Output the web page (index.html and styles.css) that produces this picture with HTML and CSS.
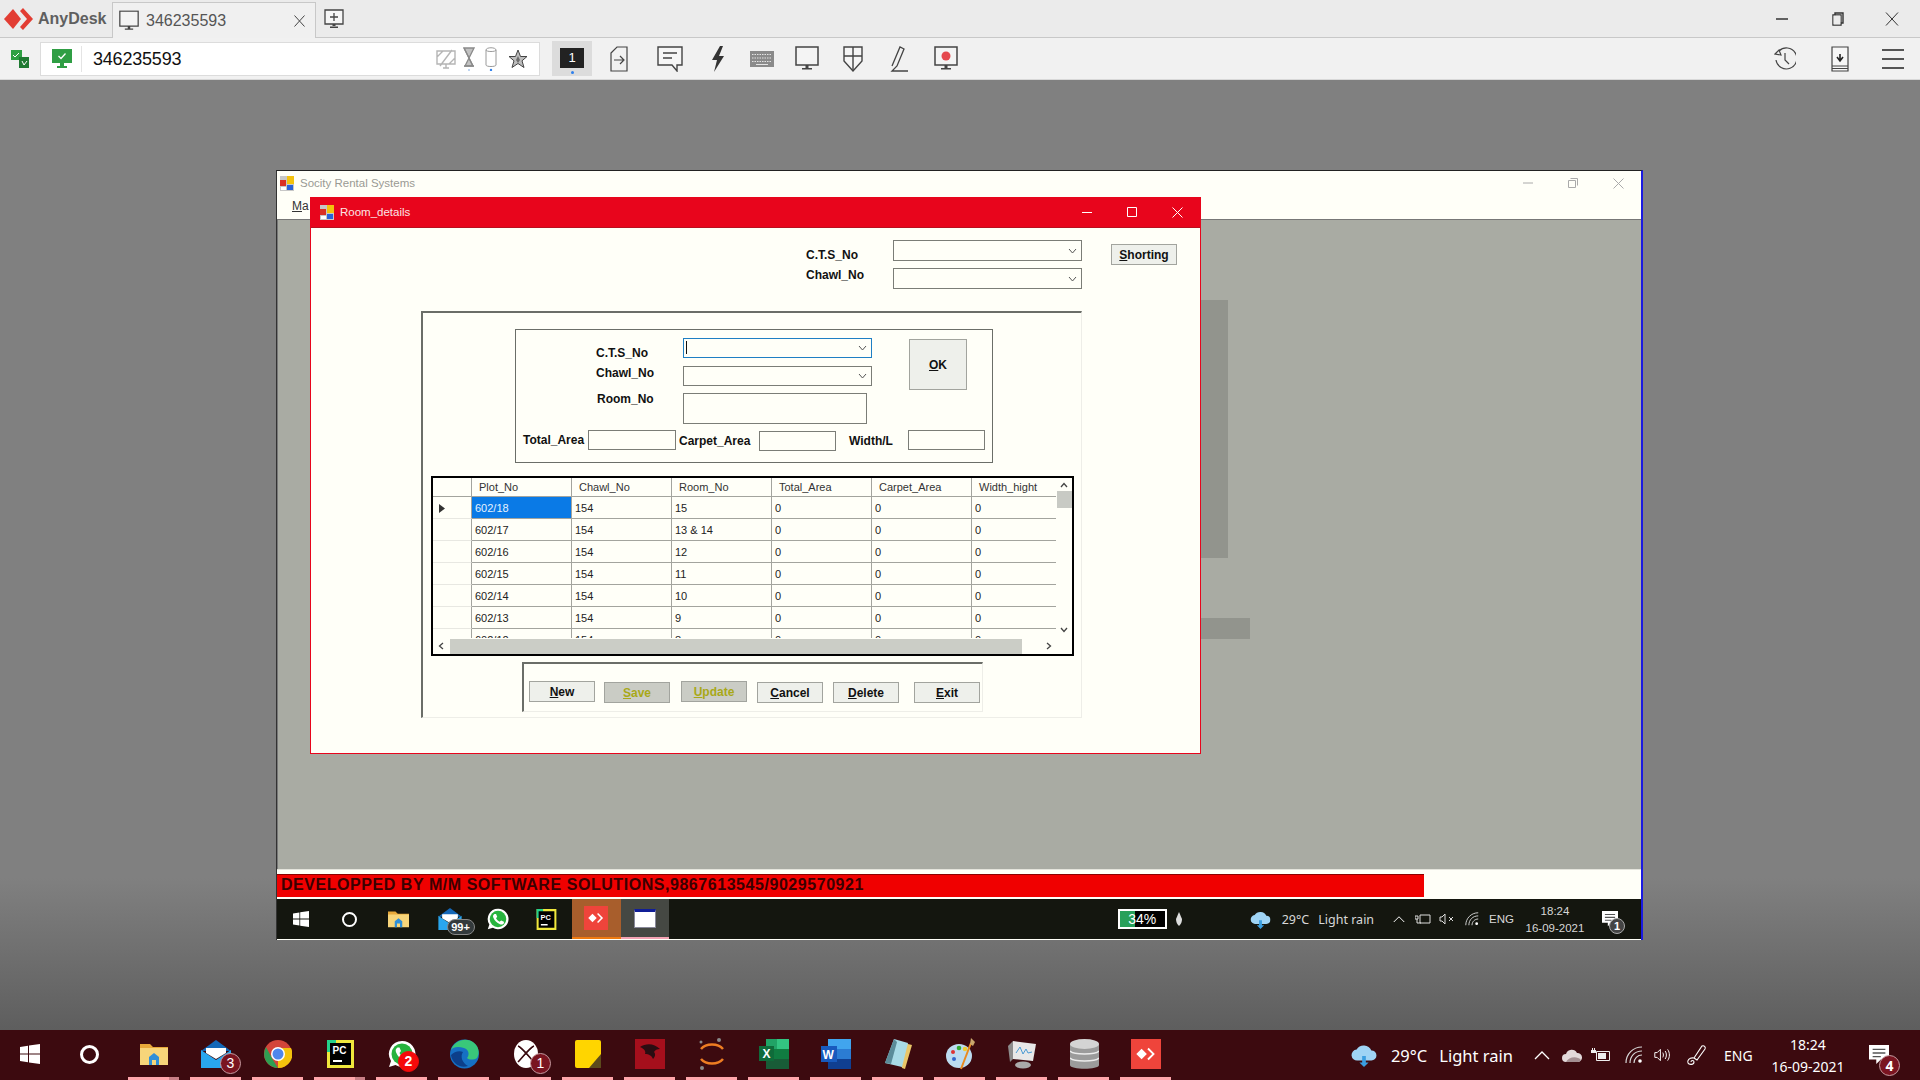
FILE: index.html
```html
<!DOCTYPE html>
<html>
<head>
  <meta charset="UTF-8">
  <title>AnyDesk - 346235593</title>
  <link rel="stylesheet" href="styles.css">
</head>
<body>

<!-- shared icons -->
<svg class="icon-defs">
  <symbol id="i-win" viewBox="0 0 20 20"><path fill="#fff" d="M0 3l8-1.200V9.500H0zM9 1.600L20 0v9.500H9zM0 10.500h8v7.700L0 17zM9 10.500h11V20L9 18.400z"/></symbol>
  <symbol id="i-folder" viewBox="0 0 28 24"><path fill="#e8a93a" d="M0 2h10l3 3h15v4H0z"/><path fill="#f7d57a" d="M0 6h28v17H0z"/><path fill="#2f8fd8" d="M9 23v-8l5-4 5 4v8h-3v-5h-4v5z"/></symbol>
  <symbol id="i-mail" viewBox="0 0 30 28"><path fill="#1468b8" d="M15 0l15 11H0z"/><path fill="#29a6ee" d="M0 10l15 10 15-10v18H0z"/><path fill="#fff" d="M5 8h20v5l-10 6-10-6z"/></symbol>
  <symbol id="i-whats" viewBox="0 0 28 28"><path fill="#fff" d="M14 1a13 13 0 0 0-11 20L1 27l6.500-2A13 13 0 1 0 14 1z"/><circle cx="14" cy="14" r="10.500" fill="#27b43e"/><path fill="#fff" d="M9.500 7.500l2 0 1.500 3.500-1.500 2c1 2 2.500 3.500 4.500 4.500l2-1.500 3.500 1.500v2c-1 1.500-3 2-5 1.200-4-1.500-7-4.500-8.500-8.500-.7-2-.2-3.500 1.500-4.700z"/></symbol>
  <symbol id="i-pc" viewBox="0 0 27 28"><path fill="#f0e73c" d="M0 0h27v28H0z"/><path fill="#23d18b" d="M0 0h9v4H4v8H0z"/><path fill="#000" d="M3 3h21v22H3z"/><path fill="#fff" d="M6 20h9v2H6z"/></symbol>
  <symbol id="i-any" viewBox="0 0 34 34"><path fill="#ef443b" d="M0 0h34v34H0z"/><path fill="#fff" d="M6 17l6-6 6 6-6 6zM20 10l7 7-7 7-1.500-1.500 5.500-5.500-5.500-5.500z"/></symbol>
  <symbol id="i-app" viewBox="0 0 14 15"><path fill="#c7c7c7" d="M0 0h14v15H0z"/><path fill="#f4c20d" d="M7 0h7v8H7z"/><path fill="#d93025" d="M0 4h6v6H0z"/><path fill="#2a62d8" d="M7 9h6v5H7z"/><path fill="#fff" d="M1 11h5v3H1z"/></symbol>
  <symbol id="i-cloud" viewBox="0 0 28 26"><path fill="#9fd4f5" d="M7 19a6 6 0 0 1-1-12 9 9 0 0 1 16 1 5.500 5.500 0 0 1 0 11z"/><path fill="#3b9ee0" d="M12 14h4v7h3l-5 5-5-5h3z"/></symbol>
  <symbol id="i-chev" viewBox="0 0 16 10"><path fill="none" stroke="#fff" stroke-width="1.300" d="M1 9l7-7 7 7"/></symbol>
  <symbol id="i-wifi" viewBox="0 0 18 18"><g fill="none" stroke="#d8d8d8" stroke-width="1.200"><path d="M1 17C1 8 8 1 17 1"/><path d="M5 17C5 10 10 5 17 5"/><path d="M9 17c0-4.500 3.500-8 8-8"/></g><circle cx="15" cy="15" r="1.800" fill="#fff"/></symbol>
  <symbol id="i-note" viewBox="0 0 22 22"><path fill="#fff" d="M0 0h22v16h-9l-5 5v-5H0z"/><path fill="#555" d="M4 4h14v1.500H4zM4 8h14v1.500H4zM4 12h9v1.500H4z"/></symbol>
  <symbol id="i-monitor" viewBox="0 0 24 26"><path fill="#f4f4f4" stroke="#444" stroke-width="1.500" d="M1 1h22v18H1z"/><path fill="#444" d="M10.500 19h3v3h-3zM7 22h10v1.500H7z"/></symbol>
</svg>

<div class="tabbar">
  <svg class="logo" width="30" height="24" viewBox="0 0 30 24"><path fill="#e23d33" d="M0 12L9 2l8 10-8 10z"/><path fill="#e23d33" d="M19 1l10 11-10 11-3-3 7-8-7-8z"/></svg>
  <span class="brand">AnyDesk</span>
  <div class="tab">
    <svg width="20" height="22" viewBox="0 0 24 26"><use href="#i-monitor"/></svg>
    <span class="tab-title">346235593</span>
    <svg class="tab-close" width="11" height="12" viewBox="0 0 11 12"><path stroke="#444" fill="none" d="M.5.500l10 11M10.500.500l-10 11"/></svg>
  </div>
  <svg class="tab-add" width="20" height="20" viewBox="0 0 20 20"><path fill="#f6f6f6" stroke="#444" stroke-width="1.300" d="M1 1h18v14H1z"/><path stroke="#444" stroke-width="1.300" d="M10 4v8M6 8h8"/><path fill="#444" d="M8.500 15h3v2h-3zM6 17.500h8V19H6z"/></svg>
  <div class="win-controls">
    <svg class="win-min" width="12" height="12" viewBox="0 0 12 12"><path stroke="#333" stroke-width="1.500" d="M0 6h12"/></svg>
    <svg width="12" height="14" viewBox="0 0 12 14"><path fill="none" stroke="#333" stroke-width="1.400" d="M3 1h8v10H3zM1 3h8v10H1z"/><path fill="#ececec" d="M1.500 3.500h7v9h-7z"/></svg>
    <svg width="14" height="14" viewBox="0 0 14 14"><path stroke="#333" fill="none" d="M1 .500l12 13M13 .500l-12 13"/></svg>
  </div>
</div>

<div class="toolbar">
  <svg class="tb-status" width="20" height="20" viewBox="0 0 20 20"><path fill="#2ea043" d="M1 1h11v10H1z"/><path fill="#1f7a32" d="M9 8h10v11H9z"/><path stroke="#fff" fill="none" d="M3 6l2 2 4-4M12 12l2 4 3-4"/></svg>
  <div class="address">
    <svg width="20" height="19" viewBox="0 0 20 19"><path fill="#2f9e44" d="M0 0h20v14H0z"/><path fill="#2f9e44" d="M8 14h4v3h3v2H5v-2h3z"/><path stroke="#fff" stroke-width="1.300" fill="none" d="M6.500 7l2.500 2.500 4.500-5"/></svg>
    <span class="address-id">346235593</span>
    <div class="addr-icons">
      <svg width="20" height="20" viewBox="0 0 20 20"><g fill="none" stroke="#b5b5b5" stroke-width="1.400"><path d="M1 2h18v13H1zM7 19h6M10 15v4M4 17L16 1M1 8l6-6M13 15l6-6"/></g></svg>
      <svg width="12" height="24" viewBox="0 0 12 24"><path fill="#c2c2c2" stroke="#8a8a8a" stroke-width="1.300" d="M1 1h10L2 19h8z"/><path fill="none" stroke="#8a8a8a" stroke-width="1.300" d="M1 1l9 18M1 19h10"/><circle cx="6" cy="23" r="1" fill="#a9c7ee"/></svg>
      <svg width="12" height="24" viewBox="0 0 12 24"><path fill="none" stroke="#9a9a9a" d="M1 3c0-3 10-3 10 0v15c0 2-10 2-10 0zM1 3c0 2 10 2 10 0"/><circle cx="6" cy="23" r="1.200" fill="#2f80ed"/></svg>
      <svg width="20" height="20" viewBox="0 0 20 20"><path fill="#bdbdbd" stroke="#444" d="M10 1l2.500 6.500H19l-5 4.300 2 6.700-6-4-6 4 2-6.700-5-4.300h6.500z"/><path fill="#6d6d6d" d="M10 7l2 4-2 3-2-3z"/></svg>
    </div>
  </div>
  <div class="tool-active"><span class="screen-no">1</span><i class="tool-dot"></i></div>
  <div class="tools">
    <svg width="18" height="26" viewBox="0 0 18 26"><path fill="none" stroke="#444" stroke-width="1.200" d="M1 7l6-6h10v24H1z"/><path fill="none" stroke="#444" stroke-width="1.200" d="M4 14h9M10 10l4 4-4 4"/></svg>
    <svg width="26" height="26" viewBox="0 0 26 26"><path fill="#f6f6f6" stroke="#444" stroke-width="1.400" d="M1 1h24v18h-5v6l-5-6H1z"/><path stroke="#444" stroke-width="1.400" d="M6 7h14M6 12h9"/></svg>
    <svg width="14" height="26" viewBox="0 0 14 26"><path fill="#333" d="M9 0L1 14h5L3 26l10-16H8l4-10z"/></svg>
    <svg width="24" height="16" viewBox="0 0 24 16"><path fill="#8a8a8a" d="M0 0h24v16H0z"/><path fill="none" stroke="#e4e4e4" stroke-dasharray="1.500 1" d="M2 3.500h20M2 7h20M2 10.500h20"/><path stroke="#e4e4e4" d="M6 13.500h12"/></svg>
    <svg width="24" height="26" viewBox="0 0 24 26"><use href="#i-monitor"/></svg>
    <svg width="20" height="26" viewBox="0 0 20 26"><path fill="#f6f6f6" stroke="#444" stroke-width="1.400" d="M1 1h18v14l-9 10-9-10z"/><path stroke="#444" stroke-width="1.400" d="M10 1v24M1 10h18"/></svg>
    <svg width="20" height="26" viewBox="0 0 20 26"><path fill="none" stroke="#444" stroke-width="1.300" d="M3 20L11 1l4 2-7 17-5 5h16"/></svg>
    <svg width="24" height="26" viewBox="0 0 24 26"><use href="#i-monitor"/><circle cx="12" cy="10" r="4.500" fill="#e5484d"/></svg>
  </div>
  <div class="tools-right">
    <svg width="22" height="24" viewBox="0 0 22 24"><path fill="none" stroke="#444" stroke-width="1.200" d="M5 4a10.500 10.500 0 1 1-3 9M11 6v7l4 4M1 7l4-4 2 5z"/></svg>
    <svg width="18" height="26" viewBox="0 0 18 26"><path fill="#f6f6f6" stroke="#444" stroke-width="1.200" d="M1 1h16v24H1z"/><path stroke="#444" d="M1 20h16M1 22.500h16"/><path stroke="#222" stroke-width="1.600" fill="none" d="M9 8v6M6 11l3 4 3-4"/></svg>
    <svg width="22" height="22" viewBox="0 0 22 22"><path stroke="#555" stroke-width="2" d="M0 2h22M0 11h22M0 20h22"/></svg>
  </div>
</div>

<div class="desktop">
  <div class="remote">
    <div class="mdi-title">
      <svg width="14" height="15" viewBox="0 0 14 15"><use href="#i-app"/></svg>
      <span>Socity Rental Systems</span>
      <div class="mdi-controls">
        <svg width="10" height="10" viewBox="0 0 10 10"><path stroke="#aaa" d="M0 5h10"/></svg>
        <svg width="10" height="10" viewBox="0 0 10 10"><path fill="none" stroke="#aaa" d="M2.500.500h7v7M.500 2.500h7v7h-7z"/></svg>
        <svg width="11" height="11" viewBox="0 0 11 11"><path stroke="#aaa" fill="none" d="M.5.500l10 10M10.500.500l-10 10"/></svg>
      </div>
    </div>
    <div class="mdi-menu"><u>M</u>a</div>
    <div class="mdi-client">
      <div class="behind behind-tall"></div>
      <div class="behind behind-wide"></div>

      <div class="dialog">
        <div class="dialog-title">
          <svg width="14" height="15" viewBox="0 0 14 15"><use href="#i-app"/></svg>
          <span>Room_details</span>
          <div class="dialog-controls">
            <svg width="10" height="10" viewBox="0 0 10 10"><path stroke="#fff" d="M0 5.500h10"/></svg>
            <svg width="10" height="10" viewBox="0 0 10 10"><path fill="none" stroke="#fff" d="M.5.500h9v9h-9z"/></svg>
            <svg width="11" height="11" viewBox="0 0 11 11"><path stroke="#fff" fill="none" d="M.5.500l10 10M10.500.500l-10 10"/></svg>
          </div>
        </div>

        <div class="filter">
          <label class="lbl lbl-low">C.T.S_No</label>
          <div class="combo"><svg width="9" height="6" viewBox="0 0 9 6"><path fill="none" stroke="#555" d="M1 1l3.500 4L8 1"/></svg></div>
          <button class="btn btn-short"><u>S</u>horting</button>
          <label class="lbl">Chawl_No</label>
          <div class="combo"><svg width="9" height="6" viewBox="0 0 9 6"><path fill="none" stroke="#555" d="M1 1l3.500 4L8 1"/></svg></div>
        </div>

        <div class="panel">
          <div class="group">
            <div class="entry">
              <label class="lbl lbl-low">C.T.S_No</label>
              <div class="combo combo-focus"><i class="caret"></i><svg width="9" height="6" viewBox="0 0 9 6"><path fill="none" stroke="#555" d="M1 1l3.500 4L8 1"/></svg></div>
              <button class="btn btn-ok"><u>O</u>K</button>
              <label class="lbl">Chawl_No</label>
              <div class="combo"><svg width="9" height="6" viewBox="0 0 9 6"><path fill="none" stroke="#555" d="M1 1l3.500 4L8 1"/></svg></div>
              <label class="lbl lbl-room">Room_No</label>
              <div class="field field-room"></div>
            </div>
            <div class="areas">
              <label class="lbl area-total">Total_Area</label>
              <div class="field area-input-total"></div>
              <label class="lbl area-carpet">Carpet_Area</label>
              <div class="field area-input-carpet"></div>
              <label class="lbl area-width">Width/L</label>
              <div class="field area-input-width"></div>
            </div>
          </div>

          <div class="gridview">
            <div class="grid-clip">
              <table>
                <colgroup><col class="c-head"><col class="c-n"><col class="c-n"><col class="c-n"><col class="c-n"><col class="c-n"><col class="c-last"></colgroup>
                <thead><tr><th></th><th>Plot_No</th><th>Chawl_No</th><th>Room_No</th><th>Total_Area</th><th>Carpet_Area</th><th>Width_hight</th></tr></thead>
                <tbody>
                  <tr><th class="row-head"><svg width="6" height="9" viewBox="0 0 6 9"><path fill="#333" d="M0 0l6 4.500L0 9z"/></svg></th><td class="selected">602/18</td><td>154</td><td>15</td><td>0</td><td>0</td><td>0</td></tr>
                  <tr><th class="row-head"></th><td>602/17</td><td>154</td><td>13 &amp; 14</td><td>0</td><td>0</td><td>0</td></tr>
                  <tr><th class="row-head"></th><td>602/16</td><td>154</td><td>12</td><td>0</td><td>0</td><td>0</td></tr>
                  <tr><th class="row-head"></th><td>602/15</td><td>154</td><td>11</td><td>0</td><td>0</td><td>0</td></tr>
                  <tr><th class="row-head"></th><td>602/14</td><td>154</td><td>10</td><td>0</td><td>0</td><td>0</td></tr>
                  <tr><th class="row-head"></th><td>602/13</td><td>154</td><td>9</td><td>0</td><td>0</td><td>0</td></tr>
                  <tr><th class="row-head"></th><td>602/12</td><td>154</td><td>8</td><td>0</td><td>0</td><td>0</td></tr>
                </tbody>
              </table>
            </div>
            <div class="vscroll">
              <svg width="8" height="6" viewBox="0 0 8 6"><path fill="none" stroke="#444" stroke-width="1.300" d="M1 5l3-3.500L7 5"/></svg>
              <i class="vthumb"></i>
              <svg class="vdown" width="8" height="6" viewBox="0 0 8 6"><path fill="none" stroke="#444" stroke-width="1.300" d="M1 1l3 3.500L7 1"/></svg>
            </div>
            <div class="hscroll">
              <svg width="6" height="8" viewBox="0 0 6 8"><path fill="none" stroke="#444" stroke-width="1.300" d="M5 1L1.500 4 5 7"/></svg>
              <i class="hthumb"></i>
              <svg width="6" height="8" viewBox="0 0 6 8"><path fill="none" stroke="#444" stroke-width="1.300" d="M1 1l3.500 3L1 7"/></svg>
            </div>
          </div>

          <div class="actions">
            <button class="btn"><u>N</u>ew</button>
            <button class="btn btn-off low gap-s"><u>S</u>ave</button>
            <button class="btn btn-off gap-u"><u>U</u>pdate</button>
            <button class="btn low"><u>C</u>ancel</button>
            <button class="btn low"><u>D</u>elete</button>
            <button class="btn low gap-x"><u>E</u>xit</button>
          </div>
        </div>
      </div>
    </div>

    <div class="mdi-strip"></div>
    <div class="mdi-status"><div class="status-red">DEVELOPPED BY M/M SOFTWARE SOLUTIONS,9867613545/9029570921</div></div>

    <div class="rtask">
      <div class="rtask-item"><svg width="16" height="16"><use href="#i-win"/></svg></div>
      <div class="rtask-item"><i class="ring ring-small"></i></div>
      <div class="rtask-item"><svg width="21" height="18" viewBox="0 0 28 24"><use href="#i-folder"/></svg></div>
      <div class="rtask-item"><svg class="shift-r" width="24" height="22" viewBox="0 0 30 28"><use href="#i-mail"/></svg><span class="rbadge">99+</span></div>
      <div class="rtask-item"><svg class="shift-r" width="22" height="22" viewBox="0 0 28 28"><use href="#i-whats"/></svg></div>
      <div class="rtask-item"><svg class="shift-r" width="21" height="21" viewBox="0 0 27 28"><use href="#i-pc"/><text x="5.500" y="14" font-family="Liberation Sans" font-weight="700" font-size="10" fill="#fff">PC</text></svg></div>
      <div class="rtask-item rtask-any"><svg width="24" height="24" viewBox="0 0 34 34"><use href="#i-any"/></svg></div>
      <div class="rtask-item rtask-win"><i class="mini-win"></i></div>
      <div class="rtray">
        <div class="batt"><i class="batt-fill"></i><span>34%</span></div>
        <svg class="rmic" width="6" height="14" viewBox="0 0 6 14"><path fill="#ddd" d="M3 0l3 7c0 3-1 5-3 7-2-2-3-4-3-7z"/></svg>
        <svg class="rcloud" width="21" height="19" viewBox="0 0 28 26"><use href="#i-cloud"/></svg>
        <span class="rweather">29°C</span>
        <span class="rweather rain">Light rain</span>
        <svg class="rchev" width="12" height="8" viewBox="0 0 16 10"><use href="#i-chev"/></svg>
        <svg class="rplug" width="16" height="12" viewBox="0 0 16 12"><path fill="none" stroke="#ddd" d="M5 2h10v8H5zM0 3h3v3H0zM2 6v4h4"/></svg>
        <svg class="rspk" width="16" height="12" viewBox="0 0 16 12"><path fill="none" stroke="#ddd" d="M1 4h2l3-3v10L3 8H1zM10 4l4 4M14 4l-4 4"/></svg>
        <svg class="rwifi" width="14" height="14" viewBox="0 0 18 18"><use href="#i-wifi"/></svg>
        <span class="reng">ENG</span>
        <div class="rclock"><span>18:24</span><span>16-09-2021</span></div>
        <div class="rnotif"><svg width="16" height="16" viewBox="0 0 22 22"><use href="#i-note"/></svg><span>1</span></div>
      </div>
    </div>
  </div>
</div>

<div class="taskbar">
  <div class="task-item"><svg width="20" height="20"><use href="#i-win"/></svg></div>
  <div class="task-item"><i class="ring"></i></div>
  <div class="task-item open stack"><svg width="28" height="24" viewBox="0 0 28 24"><use href="#i-folder"/></svg></div>
  <div class="task-item open"><svg width="30" height="28" viewBox="0 0 30 28"><use href="#i-mail"/></svg><span class="badge">3</span></div>
  <div class="task-item open"><svg width="28" height="30" viewBox="0 0 28 28">
    <circle cx="14" cy="14" r="14" fill="#d3453a"/><path fill="#f4c20d" d="M14 8h13a14 14 0 0 1-13 20z"/><path fill="#2f9e52" d="M2 7l7 13 5 8A14 14 0 0 1 2 7z"/><circle cx="14" cy="14" r="7" fill="#fff"/><circle cx="14" cy="14" r="5.500" fill="#4f86ec"/></svg></div>
  <div class="task-item open stack"><svg width="27" height="28" viewBox="0 0 27 28"><use href="#i-pc"/><text x="5.500" y="14" font-family="Liberation Sans" font-weight="700" font-size="10" fill="#fff">PC</text></svg></div>
  <div class="task-item open"><svg width="28" height="28" viewBox="0 0 28 28"><use href="#i-whats"/></svg><span class="badge badge-red">2</span></div>
  <div class="task-item open"><svg width="29" height="30" viewBox="0 0 29 30">
    <circle cx="14.500" cy="15" r="14.500" fill="#1670c4"/><path fill="#39c77a" d="M1 11C4 2 15-2 23 3c6 4 7 11 4 16-3 2-8 2-10 0 2-2 3-8-3-10C8 7 3 8 1 11z"/><path fill="#0c3f8a" d="M13 13c-3 4-1 11 5 14-8 3-16-3-17-11 3-3 8-5 12-3z"/></svg></div>
  <div class="task-item open"><svg width="26" height="28" viewBox="0 0 26 28"><ellipse cx="13" cy="14" rx="12" ry="14" fill="#fff"/><path stroke="#3c0a0f" stroke-width="1.600" d="M5 6c4 1 12 12 16 16M21 6C17 7 9 18 5 22"/></svg><span class="badge">1</span></div>
  <div class="task-item open"><svg width="26" height="28" viewBox="0 0 26 28"><path fill="#ffd500" d="M2 0h22a2 2 0 0 1 2 2v26H2a2 2 0 0 1-2-2V2a2 2 0 0 1 2-2z"/><path fill="#5c4a1c" d="M26 14L14 28h12z"/></svg></div>
  <div class="task-item open"><svg width="30" height="30" viewBox="0 0 30 30"><path fill="#a50f1c" d="M0 0h30v30H0z"/><path fill="#2a0d12" d="M5 8c6-4 14-4 20 2-3 0-5 1-6 3 2 2 1 5-1 7-1-3-4-5-8-5 1-2 0-5-5-7z"/></svg></div>
  <div class="task-item open"><svg width="28" height="34" viewBox="0 0 28 34"><g fill="none" stroke="#ee7d22" stroke-width="2.500"><path d="M3 12c5-6 17-6 22 0"/><path d="M3 22c5 6 17 6 22 0"/></g><circle cx="21" cy="3" r="2" fill="#8a8a8a"/><circle cx="3" cy="5" r="1.500" fill="#8a8a8a"/><circle cx="4" cy="31" r="2" fill="#8a8a8a"/></svg></div>
  <div class="task-item open"><svg width="30" height="30" viewBox="0 0 30 30"><path fill="#21a366" d="M7 0h23v10H7z"/><path fill="#33c481" d="M18 0h12v10H18z"/><path fill="#107c41" d="M7 10h23v10H7z"/><path fill="#185c37" d="M7 20h23v10H7z"/><path fill="#0f6b3a" d="M0 7h15v15H0z"/><text x="3.500" y="19" font-family="Liberation Sans" font-weight="700" font-size="12" fill="#fff">X</text></svg></div>
  <div class="task-item open"><svg width="30" height="30" viewBox="0 0 30 30"><path fill="#41a5ee" d="M7 0h23v10H7z"/><path fill="#2b7cd3" d="M7 10h23v10H7z"/><path fill="#103f91" d="M7 20h23v10H7z"/><path fill="#185abd" d="M0 7h16v16H0z"/><text x="1.500" y="19.500" font-family="Liberation Sans" font-weight="700" font-size="12" fill="#fff">W</text></svg></div>
  <div class="task-item open"><svg width="27" height="30" viewBox="0 0 27 30"><path fill="#e9c668" d="M11 2l16 4-7 24-3-1z"/><path fill="#a9dbe6" d="M9 0l14 4-6 24L0 24z"/><path fill="#5b8c99" d="M9 0L0 24l6 1L12 3z"/></svg></div>
  <div class="task-item open"><svg width="29" height="32" viewBox="0 0 29 32"><ellipse cx="13" cy="18" rx="13" ry="12" fill="#bcdcf0"/><circle cx="7" cy="14" r="2" fill="#d33"/><circle cx="13" cy="10" r="2.300" fill="#3a3"/><circle cx="19" cy="11" r="2.300" fill="#ec3"/><circle cx="8" cy="21" r="2" fill="#36c"/><path stroke="#e98a1f" stroke-width="2" d="M15 31L25 5"/><path fill="#c9a66b" d="M24 6l1-6 4 4-2 4z"/></svg></div>
  <div class="task-item open"><svg width="28" height="30" viewBox="0 0 28 30"><path fill="#e8e8e8" d="M5 2l23 3-3 17-20-2z"/><path fill="none" stroke="#4a9bd4" d="M8 14l4-6 3 7 3-5 2 4 4-1"/><path fill="#8d8d8d" d="M0 7l5-5v18l-3 3z"/><ellipse cx="15" cy="26" rx="8" ry="3.500" fill="#aaa"/></svg></div>
  <div class="task-item open"><svg width="29" height="30" viewBox="0 0 29 30"><path fill="#9b9b9b" d="M0 5v21c0 5 29 5 29 0V5z"/><ellipse cx="14.500" cy="5" rx="14.500" ry="5" fill="#d4d4d4"/><path fill="none" stroke="#ececec" stroke-width="1.500" d="M0 12c3 4 26 4 29 0M0 19c3 4 26 4 29 0"/></svg></div>
  <div class="task-item open"><svg width="30" height="30" viewBox="0 0 34 34"><use href="#i-any"/></svg></div>

  <div class="tray">
    <svg class="tray-cloud" width="26" height="24" viewBox="0 0 28 26"><use href="#i-cloud"/></svg>
    <span class="weather">29°C</span>
    <span class="weather rain-big">Light rain</span>
    <div class="cell cell-chev"><svg width="16" height="10" viewBox="0 0 16 10"><use href="#i-chev"/></svg></div>
    <div class="cell cell-drive"><svg width="20" height="13" viewBox="0 0 20 13"><path fill="#e3d9da" d="M4 13a4 4 0 0 1 0-8 6 6 0 0 1 11-1 4.500 4.500 0 0 1 1 9z"/><path fill="#a48f92" d="M4 13c2-4 8-6 12-4 4 1 3 4 0 4z"/></svg></div>
    <div class="cell cell-batt"><svg width="20" height="14" viewBox="0 0 20 14"><path fill="none" stroke="#eee" d="M5.500 3.500h13v9h-13z"/><path fill="#eee" d="M7 5h8v6H7zM0 2h5v3H0zM1 0h1v2H1zM3 0h1v2H3z"/></svg></div>
    <div class="cell cell-wifi"><svg width="18" height="18"><use href="#i-wifi"/></svg></div>
    <div class="cell cell-spk"><svg width="20" height="18" viewBox="0 0 20 18"><path fill="none" stroke="#fff" stroke-width="1.200" d="M1 6h3l4-4v14l-4-4H1zM11 6c1 2 1 4 0 6M14 4c2 3 2 7 0 10M17 2c3 4 3 10 0 14"/></svg></div>
    <div class="cell cell-pen"><svg width="22" height="22" viewBox="0 0 22 22"><path fill="none" stroke="#fff" stroke-width="1.100" d="M8 14L16 2c2-1 4 1 3 3l-8 11zM8 14c-5-1-7 3-6 5s6 2 6-1c0-2-3-2-3 0"/></svg></div>
    <span class="eng">ENG</span>
    <div class="clock"><span>18:24</span><span>16-09-2021</span></div>
    <div class="notif"><svg width="20" height="20" viewBox="0 0 22 22"><use href="#i-note"/></svg><span>4</span></div>
  </div>
</div>

</body>
</html>
```

FILE: styles.css
```css
* { box-sizing: border-box; }

html, body {
  margin: 0;
  height: 100%;
  overflow: hidden;
}

body {
  display: flex;
  flex-direction: column;
  width: 1920px;
  height: 1080px;
  font-family: "Liberation Sans", Arial, sans-serif;
  background: #808080;
}

.icon-defs { position: absolute; width: 0; height: 0; }

/* anydesk tab row */
.tabbar {
  display: flex;
  align-items: center;
  height: 38px;
  padding-left: 4px;
  background: #ebebeb;
  border-bottom: 1px solid #c8c8c8;
}
.brand {
  margin-left: 4px;
  width: 74px;
  font-size: 16px;
  font-weight: bold;
  color: #5f5f5f;
}
.tab {
  display: flex;
  align-items: center;
  align-self: flex-end;
  width: 204px;
  height: 36px;
  margin-bottom: -1px;
  padding-left: 6px;
  background: #f0f0f0;
  border: 1px solid #c8c8c8;
  border-bottom: none;
}
.tab-title {
  margin-left: 7px;
  font-size: 16px;
  color: #555;
}
.tab-close { margin-left: 68px; }
.tab-add { margin-left: 8px; }
.win-controls {
  display: flex;
  align-items: center;
  gap: 41px;
  margin-left: auto;
  padding-right: 21px;
}
.win-min { margin-right: 3px; }

/* anydesk toolbar */
.toolbar {
  display: flex;
  align-items: center;
  height: 42px;
  padding-left: 10px;
  background: #f1f1f1;
  border-bottom: 1px solid #d8d8d8;
}
.address {
  display: flex;
  align-items: center;
  width: 500px;
  height: 34px;
  margin-left: 10px;
  padding-left: 11px;
  background: #fff;
  border: 1px solid #dcdcdc;
}
.address-id {
  margin-left: 9px;
  padding-left: 11px;
  border-left: 1px solid #e4e4e4;
  font-size: 18px;
  letter-spacing: -0.2px;
  line-height: 26px;
  color: #111;
}
.addr-icons {
  display: flex;
  align-items: center;
  margin-left: auto;
  padding-right: 11px;
}
.addr-icons svg:nth-child(2) { margin-left: 7px; }
.addr-icons svg:nth-child(3) { margin-left: 10px; }
.addr-icons svg:nth-child(4) { margin-left: 11px; }
.tool-active {
  display: flex;
  flex-direction: column;
  align-items: center;
  width: 40px;
  height: 35px;
  margin-left: 12px;
  padding-top: 7px;
  background: #dcdcdc;
}
.screen-no {
  width: 24px;
  height: 20px;
  background: #222;
  color: #fff;
  font-size: 13px;
  line-height: 20px;
  text-align: center;
}
.tool-dot {
  width: 3px;
  height: 3px;
  margin-top: 3px;
  border-radius: 50%;
  background: #2f80ed;
}
.tools {
  display: grid;
  grid-auto-flow: column;
  grid-auto-columns: 46.700px;
  align-items: center;
  justify-items: center;
  margin-left: 4px;
}
.tools svg:nth-child(2) { margin-left: 8px; }
.tools svg:nth-child(3) { margin-left: 10px; }
.tools svg:nth-child(4) { margin-left: 6px; }
.tools svg:nth-child(5) { margin-left: 2px; }
.tools-right {
  display: flex;
  align-items: center;
  gap: 33px;
  margin-left: auto;
  padding-right: 16px;
}
.tools-right svg:first-child { margin-right: 2px; }

/* remote desktop picture */
.desktop {
  position: relative;
  flex: 1;
  background: linear-gradient(#808080 84%, #5e5e5e);
}
.remote {
  position: absolute;
  left: 276px;
  top: 90px;
  display: flex;
  flex-direction: column;
  width: 1367px;
  height: 770px;
  background: #fffff8;
  border-top: 1px solid #222;
  border-left: 1px solid #333;
  border-right: 2px solid #1a1ae0;
}
.mdi-title {
  display: flex;
  align-items: center;
  gap: 6px;
  height: 24px;
  padding-left: 3px;
  font-size: 11.500px;
  color: #9a9a94;
}
.mdi-controls {
  display: flex;
  align-items: center;
  gap: 35px;
  margin-left: auto;
  padding-right: 17px;
}
.mdi-menu {
  height: 24px;
  padding: 4px 0 0 15px;
  font-size: 12px;
  color: #333;
}
.mdi-client {
  position: relative;
  flex: 1;
  background: #a9aba3;
  border-top: 1px solid #777;
  border-left: 1px solid #777;
}
.behind {
  position: absolute;
  background: #92948d;
}
.behind-tall { left: 922px; top: 80px; width: 28px; height: 258px; }
.behind-wide { left: 922px; top: 398px; width: 50px; height: 21px; }
.mdi-strip {
  height: 5px;
  border-top: 1px solid #e4e4dc;
}
.mdi-status {
  height: 25px;
  padding-bottom: 2px;
}
.status-red {
  width: 1147px;
  height: 23px;
  padding-left: 4px;
  background: #f00000;
  border-top: 1px solid #8c0000;
  color: #3a0000;
  font-size: 16px;
  font-weight: bold;
  letter-spacing: 0.55px;
  line-height: 20px;
  white-space: nowrap;
}

/* form window */
.dialog {
  position: absolute;
  left: 32px;
  top: -23px;
  width: 891px;
  height: 557px;
  background: #fffff8;
  border: 1px solid #e8051c;
  border-top: none;
}
.dialog-title {
  display: flex;
  align-items: center;
  gap: 6px;
  height: 31px;
  padding-left: 9px;
  background: #e8051c;
  border-bottom: 1px solid #b8101f;
  color: #fbe6e6;
  font-size: 11.500px;
}
.dialog-controls {
  display: flex;
  align-items: center;
  gap: 35px;
  margin-left: auto;
  padding-right: 17px;
}

.lbl {
  display: block;
  font-size: 12px;
  font-weight: bold;
  line-height: 14px;
  color: #111;
  white-space: nowrap;
}
.lbl-low { margin-top: 8px; }

.combo, .field {
  background: #fffff8;
  border: 1px solid #7b7d77;
}
.combo {
  display: flex;
  align-items: center;
  justify-content: flex-end;
  padding-right: 4px;
}
.combo-focus { position: relative; border-color: #1f7fc4; }
.caret {
  position: absolute;
  left: 2px;
  top: 2px;
  width: 1px;
  height: 13px;
  background: #111;
}

.btn {
  width: 66px;
  height: 21px;
  padding: 0;
  background: #eef0eb;
  border: 1px solid #a2a49e;
  border-radius: 0;
  font-family: inherit;
  font-size: 12px;
  font-weight: bold;
  color: #111;
}
.btn-off { background: #caccc5; color: #a8a818; }

.filter {
  display: grid;
  grid-template-columns: 87px 189px 95px;
  grid-template-rows: 21px 21px;
  row-gap: 7px;
  margin: 12px 0 0 495px;
  width: 371px;
}
.btn-short { margin: 4px 0 0 29px; }

.panel {
  width: 661px;
  height: 407px;
  margin: 22px 0 0 110px;
  border-top: 2px solid #6b6e68;
  border-left: 2px solid #6b6e68;
  border-right: 1px solid #eeeee8;
  border-bottom: 1px solid #eeeee8;
}

.group {
  width: 478px;
  height: 134px;
  margin: 16px 0 0 92px;
  padding-top: 8px;
  border: 1px solid #6b6e68;
}
.entry {
  display: grid;
  grid-template-columns: 87px 189px 95px;
  grid-template-rows: 28px 27px 37px;
  padding-left: 80px;
}
.entry .combo { height: 20px; }
.btn-ok {
  grid-column: 3;
  grid-row: 1 / span 2;
  width: 58px;
  height: 51px;
  margin: 1px 0 0 37px;
}
.lbl-room { padding-left: 1px; margin-top: -1px; }
.field-room { width: 184px; height: 31px; }
.areas {
  display: flex;
  align-items: flex-start;
  padding-left: 7px;
}
.areas .field { height: 20px; }
.area-total { width: 65px; margin-top: 3px; }
.area-input-total { width: 88px; }
.area-carpet { width: 80px; margin: 4px 0 0 3px; }
.area-input-carpet { width: 77px; margin-top: 1px; }
.area-width { width: 59px; margin: 4px 0 0 13px; }
.area-input-width { width: 77px; }

/* data grid */
.gridview {
  display: grid;
  grid-template-columns: 623px 16px;
  grid-template-rows: 160px 16px;
  width: 643px;
  height: 180px;
  margin: 13px 0 0 8px;
  border: 2px solid #000;
}
.grid-clip { overflow: hidden; }
table {
  width: 623px;
  border-collapse: separate;
  border-spacing: 0;
  table-layout: fixed;
  font-size: 11px;
}
.c-head { width: 39px; }
.c-n { width: 100px; }
.c-last { width: 84px; }
thead th {
  height: 19px;
  padding: 0 0 0 7px;
  font-weight: normal;
  text-align: left;
  color: #333;
  border-right: 1px solid #a3a49e;
  border-bottom: 1px solid #a3a49e;
}
thead th:last-child { border-right: none; }
td {
  height: 22px;
  padding: 0 0 0 3px;
  color: #222;
  border-right: 1px solid #a3a49e;
  border-bottom: 1px solid #a3a49e;
  white-space: nowrap;
}
tr td:last-child { border-right: none; }
.row-head {
  height: 22px;
  padding: 2px 0 0 6px;
  text-align: left;
  border-right: 1px solid #a3a49e;
  border-bottom: 1px solid #e8e8e2;
}
.selected {
  background: #0a7ae6;
  color: #e6f2ff;
}
.vscroll {
  display: flex;
  flex-direction: column;
  align-items: center;
  padding-top: 4px;
}
.vthumb {
  align-self: stretch;
  height: 17px;
  margin: 3px 0 0 1px;
  background: #c8cac4;
}
.vdown { margin-top: auto; margin-bottom: 5px; }
.hscroll {
  grid-column: 1 / span 2;
  display: flex;
  align-items: center;
  padding-left: 5px;
}
.hthumb {
  width: 572px;
  height: 15px;
  margin-left: 6px;
  background: #cbcdc6;
}
.hscroll svg:last-child { margin-left: 24px; }

.actions {
  display: flex;
  align-items: flex-start;
  width: 461px;
  height: 50px;
  margin: 6px 0 0 99px;
  padding: 17px 0 0 5px;
  border-top: 2px solid #6b6e68;
  border-left: 2px solid #6b6e68;
  border-right: 1px solid #eeeee8;
  border-bottom: 1px solid #eeeee8;
}
.actions .btn { margin-left: 10px; }
.actions .btn:first-child { margin-left: 0; }
.actions .low { margin-top: 1px; }
.actions .gap-s { margin-left: 9px; }
.actions .gap-u { margin-left: 11px; }
.actions .gap-x { margin-left: 15px; }

/* remote taskbar */
.rtask {
  display: flex;
  align-items: stretch;
  height: 40px;
  margin: auto 0 1px;
  background: #14160f;
  color: #d8d8d8;
}
.rtask-item {
  position: relative;
  display: flex;
  align-items: center;
  justify-content: center;
  width: 48.500px;
}
.shift-r { margin-left: 6px; }
.ring {
  width: 19px;
  height: 19px;
  margin-right: 5px;
  border: 3px solid #fff;
  border-radius: 50%;
}
.ring-small { width: 15px; height: 15px; margin-right: 0; border-width: 2px; }
.rbadge {
  position: absolute;
  left: 24px;
  top: 20px;
  width: 28px;
  height: 16px;
  background: #333a3c;
  border: 1px solid #888;
  border-radius: 8px;
  font-size: 11px;
  font-weight: bold;
  line-height: 14px;
  text-align: center;
  color: #fff;
}
.rtask-any {
  margin-left: 4px;
  background: #a85e2c;
  border-bottom: 2px solid #ef7a10;
}
.rtask-win {
  background: #454843;
  border-bottom: 2px solid #f4a3b4;
}
.mini-win {
  width: 22px;
  height: 19px;
  background: #fff;
  border: 1px solid #889;
  border-top: 3px solid #101e96;
}
.rtray {
  display: flex;
  align-items: center;
  margin-left: auto;
  padding-right: 20px;
  font-size: 12px;
}
.batt {
  position: relative;
  width: 49px;
  height: 20px;
  background: #000;
  border: 2px solid #fff;
  text-align: center;
  font-size: 14px;
  line-height: 16px;
  color: #fff;
}
.batt span { position: relative; }
.batt-fill {
  position: absolute;
  left: 0;
  top: 0;
  width: 15px;
  height: 16px;
  background: #27a05a;
}
.rmic { margin-left: 9px; }
.rcloud { margin-left: 68px; }
.rweather { margin-left: 11px; font-family: "Noto Sans", sans-serif; font-size: 12.500px; }
.rain { margin-left: 9px; }
.rchev { margin-left: 19px; }
.rplug { margin-left: 10px; }
.rspk { margin-left: 8px; }
.rwifi { margin-left: 10px; }
.reng { margin-left: 10px; font-size: 11.500px; }
.rclock {
  display: flex;
  flex-direction: column;
  align-items: center;
  gap: 5px;
  width: 70px;
  margin-left: 6px;
  font-size: 11.500px;
}
.rnotif {
  position: relative;
  display: flex;
  width: 24px;
  margin-left: 7px;
  padding-left: 5px;
}
.rnotif span {
  position: absolute;
  left: 12px;
  top: 7px;
  width: 16px;
  height: 16px;
  background: #444;
  border: 1px solid #aaa;
  border-radius: 50%;
  color: #fff;
  font-size: 11px;
  font-weight: bold;
  line-height: 14px;
  text-align: center;
}

/* windows taskbar */
.taskbar {
  display: flex;
  align-items: stretch;
  flex: none;
  height: 50px;
  background: #3c0a0f;
  color: #fff;
}
.task-item {
  position: relative;
  display: flex;
  align-items: center;
  justify-content: center;
  width: 62px;
  padding-bottom: 2px;
}
.task-item:first-child { margin-left: -1px; }
.open::after {
  content: "";
  position: absolute;
  left: 5px;
  bottom: 0;
  width: 51px;
  height: 3px;
  background: #ffa6ab;
}
.stack::before {
  content: "";
  position: absolute;
  left: 46px;
  bottom: 0;
  z-index: 1;
  width: 10px;
  height: 3px;
  background: #c97f86;
}
.badge {
  position: absolute;
  left: 35px;
  top: 23px;
  width: 21px;
  height: 21px;
  background: #7a1420;
  border: 1px solid #c59aa0;
  border-radius: 50%;
  font-size: 14px;
  line-height: 19px;
  text-align: center;
}
.badge-red {
  left: 27px;
  top: 21px;
  background: #f50a0a;
  border-color: #f50a0a;
  font-weight: bold;
}
.tray {
  display: flex;
  align-items: center;
  margin-left: auto;
  padding-right: 23px;
  font-family: "Noto Sans", sans-serif;
}
.weather { margin-left: 14px; font-size: 16.500px; }
.rain-big { margin-left: 12px; }
.cell { display: flex; justify-content: center; }
.cell-chev { width: 28px; margin-left: 15px; }
.cell-drive { width: 32px; }
.cell-batt { width: 26px; }
.cell-wifi { width: 40px; }
.cell-spk { width: 16px; }
.cell-pen { width: 54px; }
.eng { width: 31px; font-size: 14px; }
.clock {
  display: flex;
  flex-direction: column;
  align-items: center;
  gap: 3px;
  width: 106px;
  font-size: 14px;
}
.notif {
  position: relative;
  display: flex;
  width: 36px;
  padding-left: 8px;
}
.notif span {
  position: absolute;
  left: 18px;
  top: 10px;
  width: 21px;
  height: 21px;
  background: #7a1420;
  border: 1px solid #c59aa0;
  border-radius: 50%;
  font-size: 14px;
  font-weight: bold;
  line-height: 19px;
  text-align: center;
}
```
